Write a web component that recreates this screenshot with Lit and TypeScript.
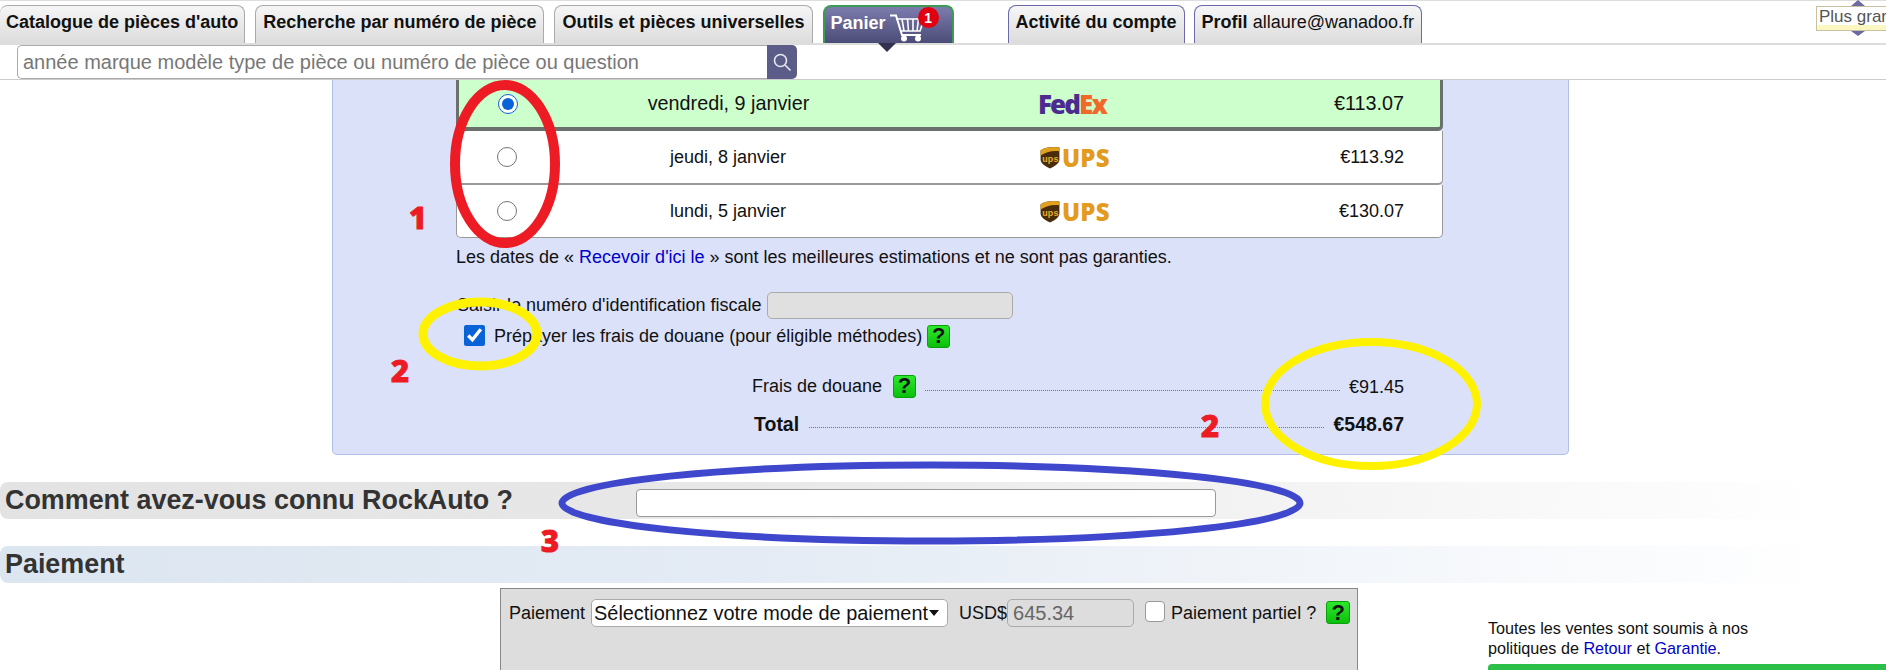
import { LitElement, html, css, svg } from "lit";
import { customElement } from "lit/decorators.js";

@customElement("app-root")
export class AppRoot extends LitElement {
  static styles = css`
    :host { display: block; position: relative; width: 1886px; height: 670px; overflow: hidden; background: #fff; font-family: "Liberation Sans", Arial, sans-serif; color: #111; font-size: 18px; }
    * { box-sizing: border-box; }
    a { color: #0000c8; text-decoration: none; }
    .tabs { display: flex; gap: 10px; height: 45px; border-top: 1px solid #ddd; border-bottom: 2px solid #ddd; padding-top: 4px; }
    .tab { position: relative; height: 38px; padding: 0 7px 4px; display: flex; align-items: center; font-weight: bold; font-size: 18px; white-space: nowrap; border: 1px solid #aaa; border-bottom: none; border-radius: 8px 8px 0 0; background: linear-gradient(#f6f6f6, #dcdcdc); color: #111; }
    .tab.first { border-left: none; padding: 0 6px 4px 6px; }
    .tab.acct { border-color: #6a6aa8; }
    .gapl { margin-left: 44px; }
    .tab.prof { margin-left: -1px; }
    .tab .plain { font-weight: normal; margin-left: 5px; }
    .tab.cart { width: 131px; padding: 0 0 4px 6px; border: 2px solid #3d9a55; border-bottom: none; background: linear-gradient(#7c7cae, #4c4c78); color: #fff; }
    .cart svg { position: absolute; left: 65px; top: 7px; }
    .badge { position: absolute; left: 93px; top: 0px; width: 21px; height: 21px; border-radius: 50%; background: #e00010; color: #fff; font-size: 14px; display: flex; align-items: center; justify-content: center; font-weight: bold; }
    .tri { position: absolute; left: 53px; top: 36px; width: 0; height: 0; border-left: 9px solid transparent; border-right: 9px solid transparent; border-top: 9px solid #33334f; z-index: 2; }
    .searchrow { display: flex; height: 35px; padding-left: 17px; border-bottom: 1px solid #ccc; }
    .search { width: 750px; height: 34px; border: 1px solid #aaa; border-right: none; border-radius: 5px 0 0 5px; padding: 0 5px; font: 20px "Liberation Sans", Arial, sans-serif; outline: none; }
    .search::placeholder { color: #777; }
    .searchbtn { width: 30px; height: 34px; background: #5c5c88; border-radius: 0 5px 5px 0; display: flex; align-items: center; justify-content: center; }
    .panel { margin-left: 332px; width: 1237px; height: 375px; background: #dce1fa; border: 1px solid #b0bfe8; border-top: none; border-radius: 0 0 5px 5px; padding-left: 123px; }
    .rows { width: 987px; }
    .row { display: grid; grid-template-columns: 100px 337px auto 1fr; align-items: center; background: #fff; height: 54px; border: 1px solid #999; border-top: none; border-bottom: 2px solid #999; padding-right: 38px; border-radius: 0 0 5px 5px; font-size: 18px; }
    .row.last { height: 53px; border-bottom-width: 1px; }
    .row.sel { grid-template-columns: 98px 337px auto 1fr; height: 51px; background: #ccffcc; font-size: 19.8px; border: 3px solid #6c706c; border-top: none; border-bottom-width: 4px; padding-right: 36px; }
    .radio { justify-self: center; width: 20px; height: 20px; margin: 0; accent-color: #0a63d6; }
    .date { text-align: center; padding-left: 5px; }
    .sel .date { padding-left: 6px; }
    .price { text-align: right; }
    .fedex { margin-left: 144px; font-family: "Open Sans", "Noto Sans", sans-serif; font-weight: 800; font-size: 26px; letter-spacing: -1.9px; line-height: 1; color: #4d2a8f; padding-top: 1px; }
    .fedex b { color: #f0692a; font-weight: 800; }
    .ups { margin-left: 146px; display: flex; align-items: center; gap: 2px; font-family: "Open Sans", "Noto Sans", sans-serif; font-weight: 800; font-size: 24px; letter-spacing: 0.2px; color: #e39b1f; }
    .shield { width: 20px; height: 23px; }
    .shield text { font: bold 8.5px "Liberation Sans", sans-serif; fill: #e8b030; }
    .note { margin-top: 8px; line-height: 22px; font-size: 18px; }
    .fiscal { display: flex; align-items: center; gap: 5px; margin-top: 24px; height: 27px; font-size: 18px; padding-left: 1px; }
    .fiscal input { width: 246px; height: 27px; background: #e0e0e0; border: 1px solid #aaa; border-radius: 5px; }
    .duty { display: flex; align-items: center; margin-top: 4px; height: 26px; padding-left: 8px; font-size: 18px; }
    .duty span.t { padding-top: 1px; }
    .check { width: 21px; height: 21px; margin: -2px 9px 0 0; accent-color: #0a63d6; }
    .help { display: inline-flex; align-items: center; justify-content: center; width: 23px; height: 23px; border-radius: 3px; border: 1px solid #0aa00a; background: linear-gradient(#2ce82c, #0cc00c); color: #111; font-weight: bold; font-size: 22px; flex: none; }
    .duty .help { margin-left: 5px; }
    .line { display: flex; align-items: center; margin-left: 296px; width: 652px; }
    .line.fee { margin-top: 25px; height: 24px; font-size: 18px; }
    .line.total { margin-top: 13px; height: 26px; font-size: 19.5px; font-weight: bold; padding-left: 2px; }
    .fee .help { margin-left: 11px; }
    .fee .val { padding-top: 3px; }
    .dots { flex: 1; border-top: 1px dotted #777; margin: 8px 9px 0; }
    .total .dots { margin: 7px 10px 0; }
    .head { display: flex; align-items: center; height: 37px; padding-left: 5px; border-radius: 8px 0 0 8px; font-size: 26.9px; font-weight: bold; color: #333; white-space: nowrap; }
    .head.how { margin-top: 27px; background: linear-gradient(90deg, #e3e3e3 0%, #e8e8e8 40%, #fff 97%); }
    .head.how span { width: 631px; }
    .head.how input { width: 580px; height: 28px; margin-top: 5px; border: 1px solid #999; border-radius: 4px; background: #fff; }
    .head.pay { margin-top: 27px; background: linear-gradient(90deg, #dce6f0 0%, #e4ebf4 40%, #fff 97%); }
    .lower { display: flex; align-items: flex-start; margin-top: 5px; }
    .paybox { margin-left: 500px; width: 858px; height: 120px; background: #ddd; border: 1px solid #888; border-bottom: none; padding: 10px 0 0 8px; display: flex; align-items: flex-start; font-size: 18px; }
    .paybox > * { flex: none; }
    .plabel { height: 28px; display: flex; align-items: center; }
    .select { margin-left: 6px; width: 357px; height: 28px; background: #fff; border: 1px solid #aaa; border-radius: 5px; display: flex; align-items: center; justify-content: space-between; padding: 0 8px 0 2px; font-size: 19.9px; white-space: nowrap; }
    .select i { width: 0; height: 0; border-left: 5px solid transparent; border-right: 5px solid transparent; border-top: 6px solid #111; }
    .usd { margin-left: 11px; }
    .amount { margin-left: 0; width: 127px; height: 28px; background: #ddd; border: 1px solid #aaa; border-radius: 5px; padding: 0 5px; font: 20px "Liberation Sans", Arial, sans-serif; color: #666; }
    .pc { appearance: none; margin: 2px 0 0 11px; width: 20px; height: 21px; background: #fff; border: 1px solid #999; border-radius: 4px; }
    .partial { margin-left: 6px; font-size: 18px; }
    .paybox .help { margin: 2px 0 0 10px; width: 24px; }
    .side { flex: 1; padding: 30px 0 0 130px; font-size: 16.2px; line-height: 20px; }
    .bar { margin-top: 6px; height: 10px; background: #2dc048; border-radius: 4px 0 0 0; }
    .size { position: absolute; left: 1816px; top: 6px; width: 90px; height: 25px; border: 1px solid #c8c0a0; background: linear-gradient(#fff 80%, #fbf7c0 80%); color: #555; font-size: 17px; line-height: 20px; padding-left: 2px; white-space: nowrap; overflow: hidden; }
    .arrow { position: absolute; left: 1851px; width: 0; height: 0; border-left: 7px solid transparent; border-right: 7px solid transparent; }
    .arrow.up { top: 0; border-bottom: 6px solid #6a6aa0; }
    .arrow.down { top: 31px; border-top: 5px solid #6a6aa0; }
    .marks { position: absolute; left: 0; top: 0; pointer-events: none; }
    .n { position: absolute; font-family: "Noto Sans", sans-serif; font-weight: 800; font-size: 31px; line-height: 33px; color: #ed1c24; -webkit-text-stroke: 1.2px #ed1c24; }
    .n1 { left: 409px; top: 201px; }
    .n2a { left: 391px; top: 354px; }
    .n2b { left: 1201px; top: 409px; }
    .n3 { left: 541px; top: 524px; font-size: 31px; }
  `;

  private shield() {
    return html`<svg class="shield" viewBox="0 0 19 22"><path d="M0.5 4 C5 1 13 0.5 18.5 1.5 V13 C18.5 17 13 20 9.5 21.5 C6 20 0.5 17 0.5 13 Z" fill="#4a2c0c"/><path d="M0.5 4 C5 1 13 0.5 18.5 1.5 V5 C12 4 5 6 0.5 9 Z" fill="#e0a020"/><text x="2" y="15">ups</text></svg>`;
  }

  private ups() {
    return html`<div class="ups">${this.shield()}<span>UPS</span></div>`;
  }

  render() {
    return html`
      <div class="tabs">
        <div class="tab first">Catalogue de pièces d'auto</div>
        <div class="tab">Recherche par numéro de pièce</div>
        <div class="tab">Outils et pièces universelles</div>
        <div class="tab cart">Panier
          <svg width="36" height="28" viewBox="0 0 36 28" fill="none" stroke="#fff" stroke-width="1.6">
            <path d="M0 1.5 H6 L12 21 H31" stroke-width="2"/>
            <path d="M6.5 5 H34 L30 17 H10 M12 5 L14 17 M17.5 5 L18.5 17 M23 5 L23 17 M28.5 5 L27 17" />
            <circle cx="14" cy="24.5" r="3" fill="#fff" stroke="none"/>
            <circle cx="28" cy="24.5" r="3" fill="#fff" stroke="none"/>
          </svg>
          <span class="badge">1</span>
          <span class="tri"></span>
        </div>
        <div class="tab acct gapl">Activité du compte</div>
        <div class="tab acct prof">Profil<span class="plain">allaure@wanadoo.fr</span></div>
      </div>
      <div class="searchrow">
        <input class="search" placeholder="année marque modèle type de pièce ou numéro de pièce ou question" />
        <div class="searchbtn">
          <svg width="20" height="20" viewBox="0 0 20 20" fill="none" stroke="#e8e8f0" stroke-width="1.6"><circle cx="8.5" cy="8.5" r="6"/><path d="M13 13 L18.5 18.5"/></svg>
        </div>
      </div>
      <div class="panel">
        <div class="rows">
          <div class="row sel">
            <input class="radio" type="radio" name="ship" checked />
            <div class="date">vendredi, 9 janvier</div>
            <div class="fedex">Fed<b>Ex</b></div>
            <div class="price">€113.07</div>
          </div>
          <div class="row">
            <input class="radio" type="radio" name="ship" />
            <div class="date">jeudi, 8 janvier</div>
            ${this.ups()}
            <div class="price">€113.92</div>
          </div>
          <div class="row last">
            <input class="radio" type="radio" name="ship" />
            <div class="date">lundi, 5 janvier</div>
            ${this.ups()}
            <div class="price">€130.07</div>
          </div>
        </div>
        <div class="note">Les dates de « <a>Recevoir d'ici le</a> » sont les meilleures estimations et ne sont pas garanties.</div>
        <div class="fiscal">Saisir le numéro d'identification fiscale <input disabled /></div>
        <div class="duty"><input class="check" type="checkbox" checked /><span class="t">Prépayer les frais de douane (pour éligible méthodes)</span><span class="help">?</span></div>
        <div class="line fee"><span>Frais de douane</span><span class="help">?</span><span class="dots"></span><span class="val">€91.45</span></div>
        <div class="line total"><span>Total</span><span class="dots"></span><span>€548.67</span></div>
      </div>
      <div class="head how"><span>Comment avez-vous connu RockAuto ?</span><input /></div>
      <div class="head pay">Paiement</div>
      <div class="lower">
        <div class="paybox">
          <span class="plabel">Paiement</span>
          <div class="select">Sélectionnez votre mode de paiement<i></i></div>
          <span class="plabel usd">USD$</span>
          <input class="amount" value="645.34" readonly />
          <input class="pc" type="checkbox" />
          <span class="plabel partial">Paiement partiel ?</span>
          <span class="help">?</span>
        </div>
        <div class="side">
          Toutes les ventes sont soumis à nos<br />politiques de <a>Retour</a> et <a>Garantie</a>.
          <div class="bar"></div>
        </div>
      </div>
      <div class="arrow up"></div>
      <div class="size">Plus grand</div>
      <div class="arrow down"></div>
      <svg class="marks" width="1886" height="670" fill="none">
        ${svg`<ellipse cx="505" cy="164" rx="50" ry="79" stroke="#ed1c24" stroke-width="10"/>
        <ellipse cx="480" cy="334" rx="57" ry="32" stroke="#fff200" stroke-width="9"/>
        <ellipse cx="1371" cy="404" rx="106" ry="62" stroke="#fff200" stroke-width="8"/>
        <ellipse cx="931" cy="503" rx="369" ry="38" stroke="#3f48cc" stroke-width="7"/>`}
      </svg>
      <span class="n n1">1</span>
      <span class="n n2a">2</span>
      <span class="n n2b">2</span>
      <span class="n n3">3</span>
    `;
  }
}
